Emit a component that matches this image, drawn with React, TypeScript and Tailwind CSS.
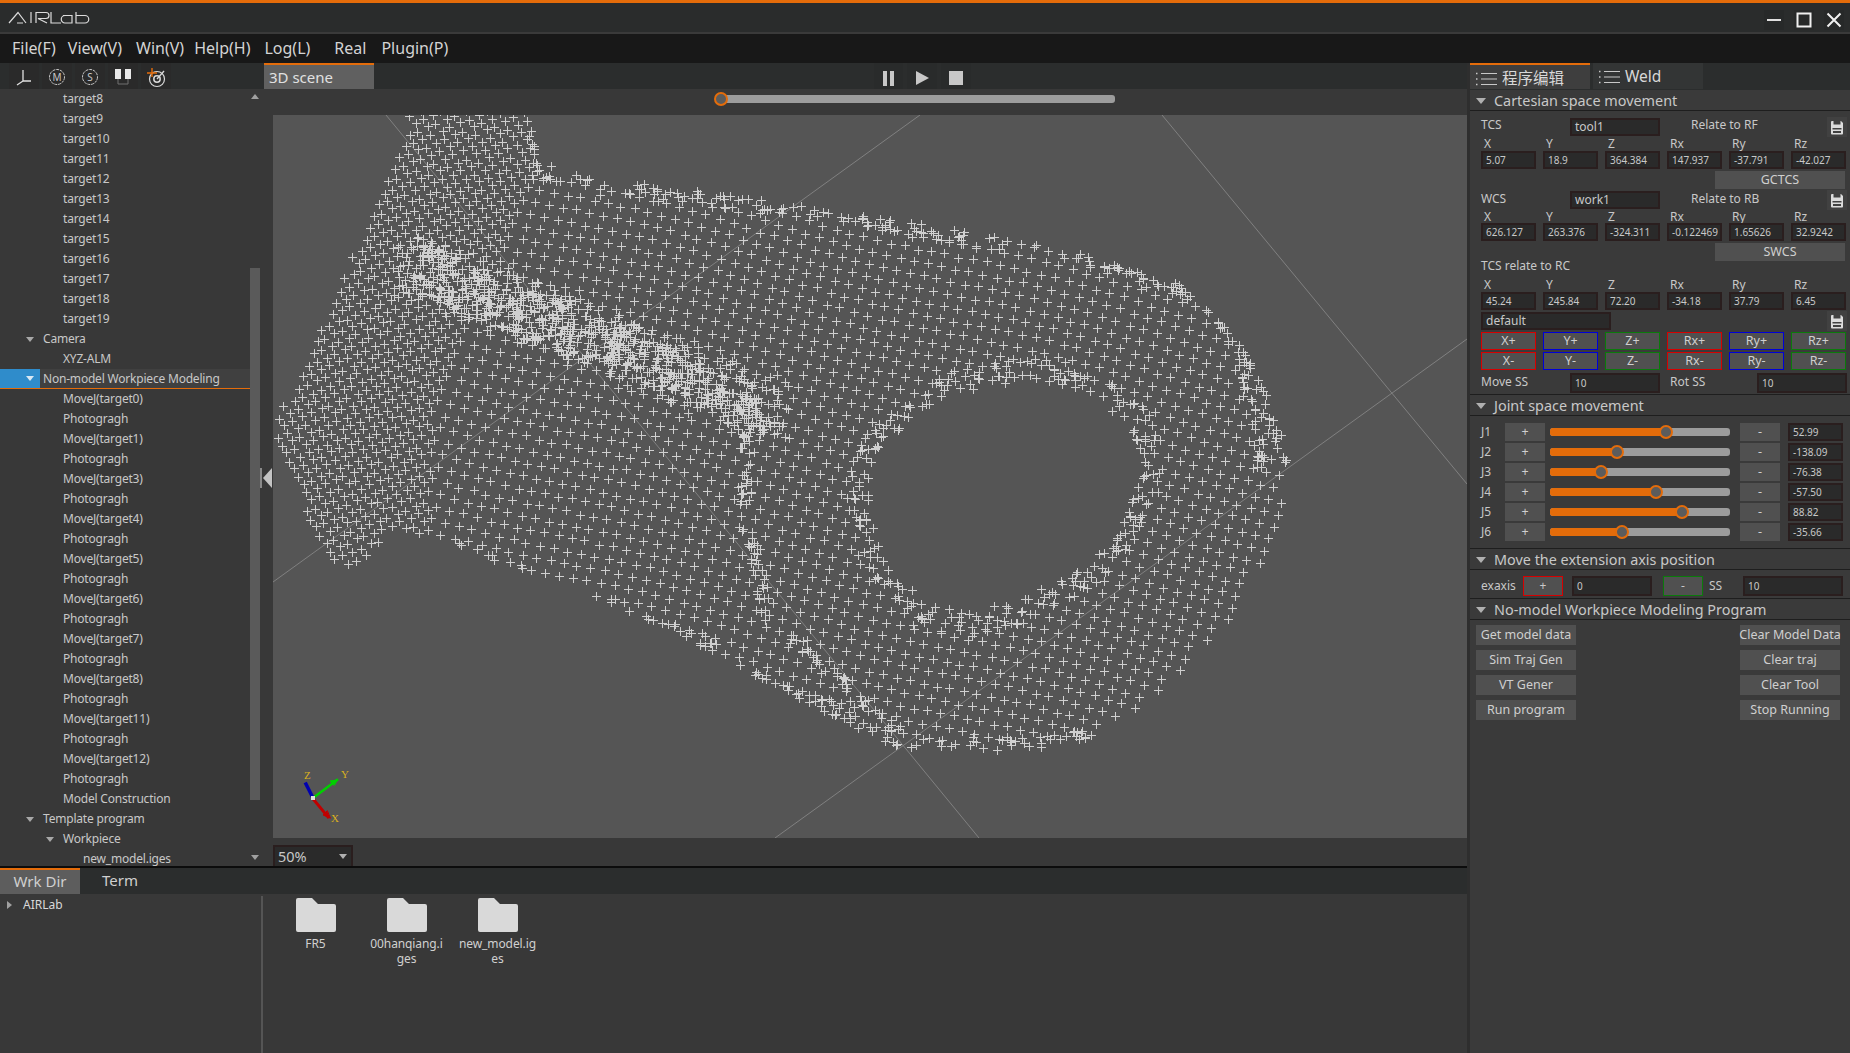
import { useMemo } from 'react'

const FONT = '"Noto Sans", "Noto Sans CJK SC", sans-serif'

type Pt = [number, number]

const OUTER: Pt[] = [
  [410, 110], [527, 110], [537, 158], [570, 172], [602, 178], [709, 192], [847, 212], [1062, 248],
  [1180, 283], [1239, 342], [1270, 400], [1289, 460], [1285, 510], [1240, 610], [1214, 640],
  [1150, 700], [1095, 737], [1016, 752], [898, 747], [800, 700], [700, 645], [555, 578], [395, 531],
  [355, 568], [325, 560], [277, 443], [273, 420], [290, 395], [330, 307], [351, 258], [382, 195],
  [403, 145],
]

// hole outline, rounded off from a handful of control points
const HOLE: Pt[] = [
  [868, 507], [872, 470], [888, 440], [920, 415], [960, 395], [1016, 383], [1060, 385], [1100, 402],
  [1130, 430], [1140, 470], [1125, 515], [1095, 555], [1040, 590], [980, 610], [930, 603], [890, 570],
]

const inside = (x: number, y: number, poly: Pt[]) => {
  let c = false
  for (let i = 0, j = poly.length - 1; i < poly.length; j = i++) {
    const [xi, yi] = poly[i]
    const [xj, yj] = poly[j]
    if (yi > y !== yj > y && x < ((xj - xi) * (y - yi)) / (yj - yi) + xi) c = !c
  }
  return c
}

// point cloud of the scanned workpiece, fixed seed so it stays the same
function buildCloud() {
  let seed = 12345
  const rnd = () => {
    seed = (seed * 16807) % 2147483647
    return seed / 2147483647
  }
  const pts: Pt[] = []
  const add = (x: number, y: number) => {
    if (inside(x, y, OUTER) && !inside(x, y, HOLE)) pts.push([x, y])
  }
  const grid = (ox: number, oy: number, keep: (x: number, y: number) => boolean) => {
    for (let i = -120; i < 120; i++) {
      for (let j = -120; j < 120; j++) {
        const bx = 700 + ox + i * 13.5 - j * 4.5
        const by = 400 + oy + i * 3.5 + j * 12
        const x = bx + Math.sin(by / 47) * 3 + (rnd() - 0.5) * 2
        const y = by + Math.sin(bx / 61) * 4 + (rnd() - 0.5) * 2
        if (keep(x, y)) add(x, y)
      }
    }
  }
  grid(0, 0, () => true)
  // left part of the piece is scanned twice
  const leftSide = (x: number, y: number) => x < 525 - ((y - 180) * 99) / 268 || (y > 420 && x < 430)
  grid(6, 7, leftSide)

  const band = (from: Pt, to: Pt, count: number, width: number, wx = 0.5) => {
    for (let n = 0; n < count; n++) {
      const t = rnd()
      add(
        from[0] + (to[0] - from[0]) * t + (rnd() - 0.5) * width * wx,
        from[1] + (to[1] - from[1]) * t + (rnd() - 0.5) * width,
      )
    }
  }
  band([410, 265], [775, 410], 760, 60, 0.7)
  band([530, 120], [537, 175], 18, 14)
  band([537, 180], [847, 215], 60, 18)
  band([847, 218], [1062, 252], 55, 18)
  band([1062, 252], [1190, 292], 40, 16)
  band([1190, 292], [1245, 350], 20, 14)
  band([1245, 350], [1288, 470], 24, 12)

  const ring = (poly: Pt[], perEdge: number, spread: number) => {
    poly.forEach((p, i) => {
      const q = poly[(i + 1) % poly.length]
      const len = Math.hypot(q[0] - p[0], q[1] - p[1])
      band(p, q, Math.round((len / 40) * perEdge), spread, 1)
    })
  }
  ring(HOLE.map(([x, y]) => [x + (x - 1000) * 0.09, y + (y - 495) * 0.14]) as Pt[], 9, 22)
  band([747, 430], [745, 520], 26, 12, 1)
  band([745, 520], [770, 620], 26, 12, 1)
  band([770, 620], [900, 735], 38, 12, 1)
  band([1240, 350], [1262, 470], 28, 10, 1)
  band([455, 545], [700, 640], 50, 14)
  band([700, 640], [900, 745], 46, 16)
  band([900, 745], [1095, 735], 30, 12)

  return pts
    .map(([x, y]) => `M${Math.round(x) - 4} ${Math.round(y) + 0.5}h9M${Math.round(x) + 0.5} ${Math.round(y) - 4}v9`)
    .join('')
}

function Scene() {
  const d = useMemo(buildCloud, [])
  return (
    <div className="relative h-[723px] w-full bg-[#555555]">
      <svg viewBox="273 115 1194 723" className="block h-full w-full">
        <g stroke="#808080" strokeWidth="1" fill="none">
          <path d="M386 115L979 838" />
          <path d="M273 582L920 115" />
          <path d="M775 838L1467 339" />
          <path d="M1162 115L1467 484" />
        </g>
        <path d={d} stroke="#d0d0d0" strokeWidth="1" fill="none" shapeRendering="crispEdges" />
        <g strokeLinecap="square" fill="none">
          <path d="M313 798L337 780" stroke="#00d000" strokeWidth="2.5" />
          <path d="M337 780l-7 1 4 4z" stroke="#00d000" strokeWidth="1" fill="#00d000" />
          <path d="M313 798L306 784" stroke="#0000b0" strokeWidth="3.5" />
          <path d="M314 800L328 817" stroke="#c00000" strokeWidth="3" />
          <path d="M330 818l-7-3 4-4z" stroke="#c00000" strokeWidth="1" fill="#c00000" />
          <rect x="311" y="796" width="4" height="4" fill="#dddddd" stroke="none" />
        </g>
        <g fill="#d8b020" fontSize="11" fontFamily="Liberation Serif, serif">
          <text x="304" y="779">Z</text>
          <text x="341" y="778">Y</text>
          <text x="331" y="822">X</text>
        </g>
      </svg>
    </div>
  )
}

const target = (n: number) => `target${n}`
const moves = [0, 1, 3, 4, 5, 6, 7, 8, 11, 12]

type Row = { text: string; level: number; open?: boolean; active?: boolean }
const treeRows: Row[] = [
  ...[8, 9, 10, 11, 12, 13, 14, 15, 16, 17, 18, 19].map((n) => ({ text: target(n), level: 2 })),
  { text: 'Camera', level: 1, open: true },
  { text: 'XYZ-ALM', level: 2 },
  { text: 'Non-model Workpiece Modeling', level: 1, open: true, active: true },
  ...moves.flatMap((n) => [
    { text: `MoveJ(target${n})`, level: 2 },
    { text: 'Photogragh', level: 2 },
  ]),
  { text: 'Model Construction', level: 2 },
  { text: 'Template program', level: 1, open: true },
  { text: 'Workpiece', level: 2, open: true },
  { text: 'new_model.iges', level: 3 },
]

function Caret({ className }: { className: string }) {
  return <span className={`block h-0 w-0 border-x-[4px] border-t-[5px] border-x-transparent ${className}`} />
}

function TreeRow({ row }: { row: Row }) {
  if (row.active) {
    return (
      <div className="flex h-[20px] shrink-0 border-b border-b-[#e46c0a]">
        <div className="flex w-[40px] items-center justify-end bg-[#2f8ccb] pr-[2px]">
          <Caret className="border-t-[#d8e8f4]" />
          <span className="w-[4px]" />
        </div>
        <div className="flex flex-1 items-center whitespace-nowrap bg-[#404040] pl-[3px] text-[12px] tracking-[-0.2px] text-[#c8c8c8]">
          {row.text}
        </div>
      </div>
    )
  }
  const left = row.level === 1 ? 'pl-[43px]' : row.level === 2 ? 'pl-[63px]' : 'pl-[83px]'
  return (
    <div className={`relative flex h-[20px] shrink-0 items-center whitespace-nowrap text-[12px] tracking-[-0.2px] text-[#c8c8c8] ${left}`}>
      {row.open && (
        <span className={`absolute top-[8px] ${row.level === 1 ? 'left-[26px]' : 'left-[46px]'}`}>
          <Caret className="border-t-[#a8a8a8]" />
        </span>
      )}
      {row.text}
    </div>
  )
}

function ToolCell({ children }: { children: React.ReactNode }) {
  return <div className="flex h-[26px] w-[30px] items-center justify-center bg-[#2a2a2a] pt-[2px]">{children}</div>
}

function ToolIcons() {
  return (
    <div className="flex w-[264px] gap-[3px] pl-[9px]">
      <ToolCell>
        <svg width="20" height="20" viewBox="0 0 20 20" fill="none" stroke="#e0e0e0" strokeWidth="1.3">
          <path d="M9 3v11M9 14l-6 4M9 14h8" />
        </svg>
      </ToolCell>
      <ToolCell>
        <svg width="20" height="20" viewBox="0 0 20 20" fill="none" stroke="#c8c8c8" strokeWidth="1">
          <circle cx="10" cy="10" r="7.5" strokeDasharray="3 0.8" />
          <text x="10" y="13.5" fontSize="10" textAnchor="middle" fill="#c8c8c8" stroke="none" fontFamily="Noto Sans, sans-serif">
            M
          </text>
        </svg>
      </ToolCell>
      <ToolCell>
        <svg width="20" height="20" viewBox="0 0 20 20" fill="none" stroke="#c8c8c8" strokeWidth="1">
          <circle cx="10" cy="10" r="7.5" strokeDasharray="3 0.8" />
          <text x="10" y="13.5" fontSize="10" textAnchor="middle" fill="#c8c8c8" stroke="none" fontFamily="Noto Sans, sans-serif">
            S
          </text>
        </svg>
      </ToolCell>
      <ToolCell>
        <svg width="20" height="20" viewBox="0 0 20 20" fill="none">
          <rect x="2" y="2" width="6" height="10" fill="#e8e8e8" />
          <rect x="12" y="2" width="6" height="10" fill="#e8e8e8" />
          <path d="M5 12v5h10v-5" stroke="#707070" strokeWidth="1" />
        </svg>
      </ToolCell>
      <ToolCell>
        <svg width="22" height="22" viewBox="0 0 22 22" fill="none">
          <circle cx="12" cy="13" r="7.5" stroke="#d8d8d8" strokeWidth="1.2" />
          <circle cx="12" cy="13" r="3.2" stroke="#d8d8d8" strokeWidth="1.5" />
          <path d="M12 13L19 5" stroke="#d8d8d8" strokeWidth="1.4" />
          <path d="M7 2v9M2 7h10" stroke="#e46c0a" strokeWidth="1.4" />
        </svg>
      </ToolCell>
    </div>
  )
}

function Logo() {
  return (
    <svg width="84" height="14" viewBox="0 0 84 14" fill="none" stroke="#dcdcdc" strokeWidth="1.2" className="ml-[8px]">
      <path d="M1 12L10 1.5L18 12M9 12H15" />
      <path d="M23 1v11" />
      <path d="M28 12V1.5H38a2.5 2.5 0 0 1 0 6H30L39 12" />
      <path d="M43 1v11H53" />
      <path d="M55 4.5H64V12H57a3.5 3.5 0 0 1 0-7.5" />
      <path d="M68 1v11H77a3.7 3.7 0 0 0 0-7.5H68" />
    </svg>
  )
}

function TitleBar() {
  return (
    <div className="flex h-[29px] shrink-0 items-center justify-between bg-[#2a2c2c]">
      <Logo />
      <div className="mb-[2px] mr-[6px] flex gap-[10px] self-end">
        <div className="flex h-[20px] w-[20px] items-center justify-center bg-[#272929]">
          <svg width="16" height="16" viewBox="0 0 16 16" stroke="#e0e0e0" strokeWidth="2">
            <path d="M1 8h14" />
          </svg>
        </div>
        <div className="flex h-[20px] w-[20px] items-center justify-center bg-[#272929]">
          <svg width="16" height="16" viewBox="0 0 16 16" stroke="#f0f0f0" strokeWidth="2" fill="none">
            <path d="M1.5 1.5h13v13h-13z" />
          </svg>
        </div>
        <div className="flex h-[20px] w-[20px] items-center justify-center bg-[#272929]">
          <svg width="16" height="16" viewBox="0 0 16 16" stroke="#f0f0f0" strokeWidth="2">
            <path d="M1.5 1.5l13 13M14.5 1.5l-13 13" />
          </svg>
        </div>
      </div>
    </div>
  )
}

function MenuBar() {
  const items: [string, string][] = [
    ['File(F)', 'ml-[12px]'],
    ['View(V)', 'ml-[12px]'],
    ['Win(V)', 'ml-[14px]'],
    ['Help(H)', 'ml-[10px]'],
    ['Log(L)', 'ml-[14px]'],
    ['Real', 'ml-[24px]'],
    ['Plugin(P)', 'ml-[15px]'],
  ]
  return (
    <div className="flex h-[28px] shrink-0 items-center bg-[#181818] text-[16px] text-[#d4d4d4]">
      {items.map(([t, m]) => (
        <span key={t} className={m}>
          {t}
        </span>
      ))}
    </div>
  )
}

function Slider({ width, pos, h = 'h-[8px]' }: { width: number; pos: number; h?: string }) {
  return (
    <div className={`relative shrink-0 rounded-[3px] bg-[#9c9c9c] ${h}`} style={{ width }}>
      <div className={`rounded-[3px] bg-[#e46c0a] ${h}`} style={{ width: pos }} />
      <div
        className="absolute top-1/2 h-[14px] w-[14px] -translate-x-1/2 -translate-y-1/2 rounded-full border-2 border-[#e46c0a] bg-[#5c5c5c]"
        style={{ left: pos }}
      />
    </div>
  )
}

function Input({ value, className = '' }: { value: string; className?: string }) {
  return (
    <div
      className={`flex h-[18px] shrink-0 items-center overflow-hidden whitespace-nowrap border-2 border-[#2a1e1e] bg-[#2a2a2a] pl-[3px] text-[10px] text-[#c8c8c8] ${className}`}
    >
      {value}
    </div>
  )
}

function Save() {
  return (
    <div className="flex h-[20px] w-[20px] shrink-0 items-center justify-center bg-[#414141]">
      <svg width="14" height="15" viewBox="0 0 14 15">
        <path d="M2 1h9l2 2v10.500a1 1 0 0 1-1 1H2a1 1 0 0 1-1-1V2a1 1 0 0 1 1-1z" fill="#dcdcdc" />
        <rect x="3.500" y="1" width="7" height="3.500" fill="#414141" />
        <rect x="2.500" y="8" width="9" height="1.500" fill="#414141" />
        <rect x="3" y="11" width="8" height="2" fill="#414141" />
      </svg>
    </div>
  )
}

function SectionHead({ title }: { title: string }) {
  return (
    <div className="flex h-[21px] shrink-0 items-center border-b border-b-[#1e1e1e] bg-[#3a3a3a] pt-[2px] text-[14.4px] text-[#c8c8c8]">
      <Caret className="ml-[6px] mr-[8px] border-x-[5px] border-t-[6px] border-t-[#b0b0b0]" />
      {title}
    </div>
  )
}

function PoseLabels({ h }: { h: string }) {
  return (
    <div className={`grid grid-cols-[repeat(6,55px)] gap-x-[7px] pl-[3px] text-[12px] leading-none text-[#c8c8c8] ${h} items-center`}>
      {['X', 'Y', 'Z', 'Rx', 'Ry', 'Rz'].map((l) => (
        <span key={l}>{l}</span>
      ))}
    </div>
  )
}

function PoseValues({ values }: { values: string[] }) {
  return (
    <div className="grid grid-cols-[repeat(6,55px)] gap-x-[7px]">
      {values.map((v, i) => (
        <Input key={i} value={v} />
      ))}
    </div>
  )
}

function PlainBtn({ text, className = '' }: { text: string; className?: string }) {
  return (
    <div className={`flex shrink-0 items-center justify-center whitespace-nowrap bg-[#505050] text-[12.5px] text-[#cfcfcf] ${className}`}>
      {text}
    </div>
  )
}

const jogColours = ['border-[#d80000]', 'border-[#0000d8]', 'border-[#0b7a0b]', 'border-[#d80000]', 'border-[#0000d8]', 'border-[#0b7a0b]']

function JogRow({ sign }: { sign: string }) {
  return (
    <div className="grid h-[18px] grid-cols-[repeat(6,55px)] gap-x-[7px]">
      {['X', 'Y', 'Z', 'Rx', 'Ry', 'Rz'].map((a, i) => (
        <div
          key={a}
          className={`flex h-[18px] items-center justify-center border bg-[#505050] text-[12.5px] text-[#cfcfcf] ${jogColours[i]}`}
        >
          {a + sign}
        </div>
      ))}
    </div>
  )
}

const joints: [string, number, string][] = [
  ['J1', 116, '52.99'],
  ['J2', 67, '-138.09'],
  ['J3', 51, '-76.38'],
  ['J4', 106, '-57.50'],
  ['J5', 132, '88.82'],
  ['J6', 72, '-35.66'],
]

function JointRow({ name, pos, value }: { name: string; pos: number; value: string }) {
  return (
    <div className="flex h-[20px] items-center pl-[11px] text-[12px] text-[#c8c8c8]">
      <span className="w-[24px]">{name}</span>
      <PlainBtn text="+" className="h-[18px] w-[40px]" />
      <div className="ml-[5px]">
        <Slider width={180} pos={pos} />
      </div>
      <PlainBtn text="-" className="ml-[10px] h-[18px] w-[40px]" />
      <Input value={value} className="ml-[8px] w-[55px]" />
    </div>
  )
}

function TabIcon() {
  return (
    <svg width="22" height="14" viewBox="0 0 22 14" stroke="#c8c8c8" strokeWidth="1.2" fill="none">
      <path d="M6 1.500h16M6 7h16M6 12.500h16" />
      <path d="M1 1.500h1.500M1 7h1.500M1 12.500h1.500" strokeWidth="1.600" />
    </svg>
  )
}

function RightPanel() {
  const modelLeft = ['Get model data', 'Sim Traj Gen', 'VT Gener', 'Run program']
  const modelRight = ['Clear Model Data', 'Clear traj', 'Clear Tool', 'Stop Running']
  return (
    <div className="flex w-[383px] shrink-0 flex-col border-l-[3px] border-l-[#2e2e2e] bg-[#3a3a3a]">
      <div className="flex h-[27px] shrink-0 items-end gap-[3px] bg-[#2b2d2d] pb-px">
        <div className="flex h-[26px] w-[120px] items-center gap-[5px] border-t-2 border-t-[#e46c0a] bg-[#3e3e3e] pl-[5px] pt-[4px] text-[15.500px] text-[#d8d8d8]">
          <TabIcon />
          程序编辑
        </div>
        <div className="flex h-[26px] w-[110px] items-center gap-[5px] bg-[#333535] pl-[5px] pt-[2px] text-[15.500px] text-[#d8d8d8]">
          <TabIcon />
          Weld
        </div>
      </div>
      <SectionHead title="Cartesian space movement" />
      <div className="flex h-[283px] shrink-0 flex-col pl-[11px] pt-[6px] text-[12px] text-[#c8c8c8]">
        <div className="flex h-[20px] items-center">
          <span className="mb-[5px] w-[89px]">TCS</span>
          <Input value="tool1" className="w-[90px] text-[12px]" />
          <span className="mb-[5px] ml-[31px] w-[136px]">Relate to RF</span>
          <Save />
        </div>
        <PoseLabels h="h-[14px]" />
        <PoseValues values={['5.07', '18.9', '364.384', '147.937', '-37.791', '-42.027']} />
        <PlainBtn text="GCTCS" className="ml-[234px] mt-[2px] h-[18px] w-[130px]" />
        <div className="mt-px flex h-[20px] items-center">
          <span className="mb-[3px] w-[89px]">WCS</span>
          <Input value="work1" className="w-[90px] text-[12px]" />
          <span className="mb-[3px] ml-[31px] w-[136px]">Relate to RB</span>
          <Save />
        </div>
        <PoseLabels h="h-[13px]" />
        <PoseValues values={['626.127', '263.376', '-324.311', '-0.122469', '1.65626', '32.9242']} />
        <PlainBtn text="SWCS" className="ml-[234px] mt-[2px] h-[18px] w-[130px]" />
        <div className="h-[17px] leading-[9px]">TCS relate to RC</div>
        <PoseLabels h="h-[14px]" />
        <PoseValues values={['45.24', '245.84', '72.20', '-34.18', '37.79', '6.45']} />
        <div className="mt-[2px] flex h-[18px] items-center">
          <Input value="default" className="w-[130px] text-[12px]" />
          <span className="w-[216px]" />
          <Save />
        </div>
        <div className="mt-[2px]">
          <JogRow sign="+" />
        </div>
        <div className="mt-[2px]">
          <JogRow sign="-" />
        </div>
        <div className="mt-[3px] flex h-[20px] items-center">
          <span className="mb-[2px] w-[89px]">Move SS</span>
          <Input value="10" className="h-[20px] w-[90px]" />
          <span className="mb-[2px] ml-[10px] w-[87px]">Rot SS</span>
          <Input value="10" className="h-[20px] w-[90px]" />
        </div>
      </div>
      <div className="border-t border-t-[#1e1e1e]" />
      <SectionHead title="Joint space movement" />
      <div className="flex h-[132px] shrink-0 flex-col pt-[6px]">
        {joints.map(([n, p, v]) => (
          <JointRow key={n} name={n} pos={p} value={v} />
        ))}
      </div>
      <div className="border-t border-t-[#1e1e1e]" />
      <SectionHead title="Move the extension axis position" />
      <div className="flex h-[28px] shrink-0 items-center pl-[11px] pt-[4px] text-[12px] text-[#c8c8c8]">
        <span className="w-[42px]">exaxis</span>
        <div className="flex h-[20px] w-[40px] items-center justify-center border border-[#d80000] bg-[#505050]">+</div>
        <Input value="0" className="ml-[9px] h-[20px] w-[80px]" />
        <div className="ml-[11px] flex h-[20px] w-[40px] items-center justify-center border border-[#0b7a0b] bg-[#505050]">-</div>
        <span className="ml-[6px] w-[34px]">SS</span>
        <Input value="10" className="h-[20px] w-[100px]" />
      </div>
      <div className="border-t border-t-[#1e1e1e]" />
      <SectionHead title="No-model Workpiece Modeling Program" />
      <div className="flex justify-between pl-[6px] pr-[10px] pt-[5px]">
        <div className="flex flex-col gap-[5px]">
          {modelLeft.map((t) => (
            <PlainBtn key={t} text={t} className="h-[20px] w-[100px]" />
          ))}
        </div>
        <div className="flex flex-col gap-[5px]">
          {modelRight.map((t) => (
            <PlainBtn key={t} text={t} className="h-[20px] w-[100px]" />
          ))}
        </div>
      </div>
    </div>
  )
}

function Folder({ label }: { label: string }) {
  return (
    <div className="flex w-[91px] flex-col items-center">
      <svg width="40" height="34" viewBox="0 0 40 34">
        <path d="M2 0h14l6 6h16a2 2 0 0 1 2 2v24a2 2 0 0 1-2 2H2a2 2 0 0 1-2-2V2a2 2 0 0 1 2-2z" fill="#d9d9d9" />
      </svg>
      <div className="mt-[4px] w-[78px] break-all text-center text-[12px] leading-[15px] tracking-[-0.1px] text-[#d0d0d0]">{label}</div>
    </div>
  )
}

function Workspace() {
  return (
    <div className="flex w-[1467px] shrink-0 flex-col">
      <div className="flex h-[26px] shrink-0 items-stretch bg-[#2b2d2d]">
        <ToolIcons />
        <div className="flex w-[110px] items-center border-t-2 border-t-[#e46c0a] bg-[#606060] pl-[5px] text-[15px] text-[#e0e0e0]">
          3D scene
        </div>
        <div className="ml-[500px] flex gap-[4px]">
          <div className="flex w-[29px] items-center justify-center bg-[#292b2b] pt-[4px]">
            <span className="h-[15px] w-[4px] bg-[#c8c8c8]" />
            <span className="ml-[3px] h-[15px] w-[4px] bg-[#c8c8c8]" />
          </div>
          <div className="flex w-[30px] items-center justify-center bg-[#292b2b] pt-[4px]">
            <span className="block h-0 w-0 border-y-[7px] border-l-[13px] border-y-transparent border-l-[#c8c8c8]" />
          </div>
          <div className="flex w-[30px] items-center justify-center bg-[#292b2b] pt-[4px]">
            <span className="h-[14px] w-[14px] bg-[#c8c8c8]" />
          </div>
        </div>
      </div>

      <div className="flex h-[777px] shrink-0 bg-[#383838]">
        <div className="h-full w-[250px] shrink-0 overflow-hidden">
          {treeRows.map((r, i) => (
            <TreeRow key={i} row={r} />
          ))}
        </div>
        <div className="flex h-full w-[10px] shrink-0 flex-col items-center">
          <Caret className="mt-[5px] rotate-180 border-t-[#a0a0a0]" />
          <div className="mt-[169px] h-[532px] w-full bg-[#5a5a5a]" />
          <Caret className="mt-[55px] border-t-[#a0a0a0]" />
        </div>
        <div className="flex h-full w-[13px] shrink-0 items-center">
          <span className="h-[20px] w-[2px] bg-[#8a8a8a]" />
          <span className="ml-px block h-0 w-0 border-y-[10px] border-r-[9px] border-y-transparent border-r-[#c4c4c4]" />
        </div>
        <div className="flex h-full min-w-0 flex-1 flex-col">
          <div className="flex h-[26px] shrink-0 items-center pb-[6px] pl-[448px]">
            <Slider width={394} pos={0} />
          </div>
          <Scene />
          <div className="flex flex-1 items-end">
            <div className="flex h-[21px] w-[80px] items-center justify-between border-2 border-b-0 border-[#2a1e1e] bg-[#2a2a2a] pl-[3px] pr-[4px] text-[14.500px] text-[#c8c8c8]">
              50%
              <Caret className="border-t-[#b0b0b0]" />
            </div>
          </div>
        </div>
      </div>

      <div className="h-[2px] shrink-0 bg-[#0c0c0c]" />
      <div className="flex h-[26px] shrink-0 bg-[#2b2d2d] pb-[2px] text-[15px] text-[#d0d0d0]">
        <div className="-mb-[2px] flex w-[80px] items-center justify-center border-t-2 border-t-[#e46c0a] bg-[#5d5d5d] pb-[2px]">Wrk Dir</div>
        <div className="ml-[22px] flex items-center">Term</div>
      </div>
      <div className="flex min-h-0 flex-1 bg-[#383838]">
        <div className="relative h-full w-[261px] shrink-0 pl-[23px] pt-[2px] text-[12px] text-[#d8d8d8]">
          <span className="absolute left-[7px] top-[7px] block h-0 w-0 border-y-[4px] border-l-[5px] border-y-transparent border-l-[#a0a0a0]" />
          AIRLab
        </div>
        <div className="mt-[2px] w-[2px] shrink-0 bg-[#555555]" />
        <div className="flex pl-[7px] pt-[4px]">
          <Folder label="FR5" />
          <Folder label="00hanqiang.iges" />
          <Folder label="new_model.iges" />
        </div>
      </div>
    </div>
  )
}

export default function App() {
  return (
    <div className="flex h-[1053px] w-[1850px] flex-col overflow-hidden bg-[#383838]" style={{ fontFamily: FONT }}>
      <div className="h-[3px] shrink-0 bg-[#e46c0a]" />
      <TitleBar />
      <div className="h-[2px] shrink-0 bg-[#3a3a3a]" />
      <MenuBar />
      <div className="h-px shrink-0 bg-[#181818]" />
      <div className="flex min-h-0 flex-1">
        <Workspace />
        <RightPanel />
      </div>
    </div>
  )
}
